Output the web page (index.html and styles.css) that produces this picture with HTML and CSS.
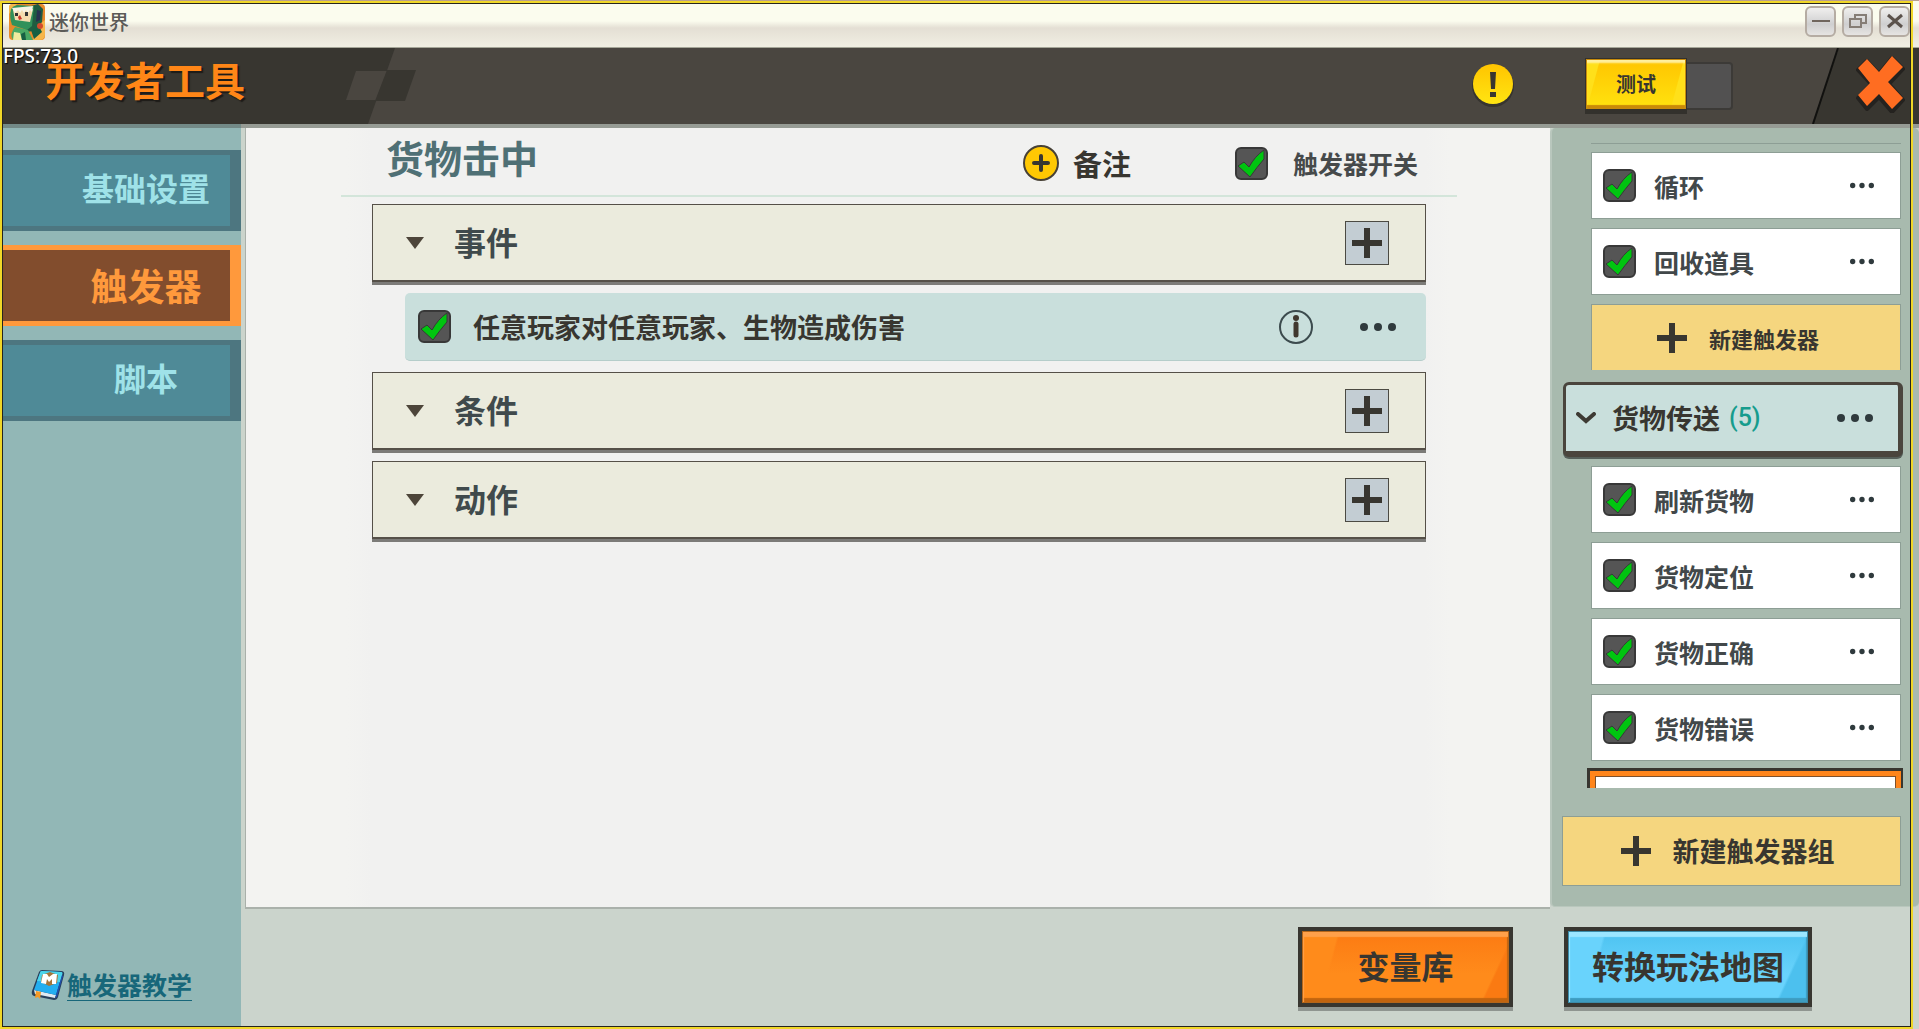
FILE: index.html
```html
<!DOCTYPE html>
<html lang="zh-CN">
<head>
<meta charset="utf-8">
<title>迷你世界</title>
<link rel="stylesheet" href="styles.css">
</head>
<body>
<svg class="symbols" aria-hidden="true">
  <symbol id="plus" viewBox="0 0 30 30"><path d="M12 0h6v12h12v6H18v12h-6V18H0v-6h12z" fill="#383630"/></symbol>
  <symbol id="dots" viewBox="0 0 36 10"><g fill="#2f3a3d"><circle cx="4" cy="5" r="4"/><circle cx="18" cy="5" r="4"/><circle cx="32" cy="5" r="4"/></g></symbol>
  <symbol id="arrow" viewBox="0 0 18 12"><path d="M0 0h18L9 12z" fill="#4d453a"/></symbol>
</svg>

<div class="titlebar">
  <svg class="app-icon" viewBox="0 0 36 36" aria-hidden="true">
    <rect width="36" height="36" rx="4" fill="#e8892a"/>
    <path d="M0 3Q0 0 4 0h4L0 10zM26 24l10-8v14q0 6-6 6h-6z" fill="#f6b64a"/>
    <path d="M22 2l7-2 5 5-1 13-8 9-9 1z" fill="#1f5d41"/>
    <path d="M2 5q2-3 6-4l17 1-2 20-5 4-15-5q-3-8-1-16z" fill="#31915a"/>
    <path d="M4 6l20-1-3 13-15-2z" fill="#f5dcae"/>
    <path d="M3 4l21-2-1 6-2-2-2 3-2-3-2 3-2-3-2 3-2-3-3 3z" fill="#f7f4e6"/>
    <path d="M6 9h3v3H6zM16 8h3v4h-3z" fill="#333"/>
    <path d="M9 13l2-2 2 4-3 1z" fill="#c93628"/>
    <path d="M28 6l4 1-1 9-4 2z" fill="#27324f"/>
    <path d="M6 23l13 3 5 10H4q-4-6 2-13z" fill="#49a964"/>
    <path d="M5 28l6 1 2 7H4z" fill="#f1eb9e"/>
    <path d="M12 30l4-2 1 8h-4zM22 26l8-4 3 6-8 7z" fill="#176043"/>
    <circle cx="31" cy="22" r="3" fill="#d24a2c"/>
  </svg>
  <span class="app-name">迷你世界</span>
  <div class="window-buttons">
    <button class="window-button" aria-label="最小化"><svg width="18" height="18" viewBox="0 0 18 18"><path d="M0 9h18" stroke="#70665e" stroke-width="2"/></svg></button>
    <button class="window-button" aria-label="还原"><svg width="18" height="18" viewBox="0 0 18 18"><g fill="none" stroke="#857d76" stroke-width="2"><path d="M6 6V3h11v8h-4"/><path d="M1 7h11v8H1z"/></g></svg></button>
    <button class="window-button" aria-label="关闭窗口"><svg width="18" height="18" viewBox="0 0 18 18"><path d="M2 3l14 12M16 3L2 15" stroke="#5b524c" stroke-width="3"/></svg></button>
  </div>
</div>

<header class="header">
  <svg class="header-art" width="420" height="76" viewBox="0 0 420 76" aria-hidden="true">
    <path d="M0 0h395l-27 76H0z" fill="#383630"/>
    <path d="M356 23h31l-11 29h-30z" fill="#4a4640"/>
    <path d="M387 22h29l-11 31h-30z" fill="#383630"/>
  </svg>
  <h1 class="tool-title">开发者工具</h1>
  <span class="fps">FPS:73.0</span>
  <button class="notice" aria-label="提示">
    <svg width="44" height="44" viewBox="0 0 44 44"><defs><linearGradient id="gold" x2="0" y2="1"><stop offset="0" stop-color="#ffc400"/><stop offset="1" stop-color="#ffe512"/></linearGradient></defs><circle cx="22" cy="22" r="21" fill="#36342f"/><circle cx="22" cy="20" r="20" fill="url(#gold)"/><path d="M19 8h6l-1 17h-4zM19 28h6v5h-6z" fill="#383630"/></svg>
  </button>
  <div class="mode-switch">
    <button class="mode-button">测试</button>
    <span class="mode-track"></span>
  </div>
  <div class="header-close">
    <svg class="close-slant" viewBox="0 0 27 76" aria-hidden="true"><path d="M27 0L0 76h27z" fill="#383630"/><path d="M26 0L1 76" stroke="#11110f" stroke-width="2"/></svg>
    <button class="close-button" aria-label="关闭">
      <svg width="50" height="58" viewBox="0 0 50 58"><path d="M3 15l9-9 12 13L37 3l11 11-14 15 14 16-11 12-13-15-12 12-9-11 13-14z" fill="#24221f" stroke="#24221f" stroke-width="4" stroke-linejoin="round"/><path d="M3 13l9-9 12 13L37 1l11 11-15 15 15 16-11 11-13-15-12 12-9-11 12-12z" fill="#ff6d21"/></svg>
    </button>
  </div>
</header>

<div class="workspace">
  <nav class="sidebar">
    <button class="tab">基础设置</button>
    <button class="tab tab-active">触发器</button>
    <button class="tab">脚本</button>
    <a class="tutorial" href="#">
      <svg width="34" height="32" viewBox="0 0 34 32" aria-hidden="true"><path d="M11 1l19 1q4 0 3 4l-6 22q-1 3-4 3L3 27q-3-1-2-5l7-19q1-2 3-2z" fill="#28405c"/><path d="M3 21l22 5-1 3L4 25z" fill="#dfeaf2"/><path d="M11 2l19 1q2 0 1 3l-6 20-22-5 6-17q0-2 2-2z" fill="#23aef0"/><path d="M11 2l19 1q2 0 1 3l-2 7L6 12l3-8q0-2 2-2z" fill="#4cd4ea"/><path d="M25 26l6-20 1 1-6 21-2 1z" fill="#1f4fae"/><path d="M11 6l8-3 8 3-1 8-8 3-8-4z" fill="#a5763a"/><path d="M10 14l2-9h4l2 3 4-3h4l-1 10h-4v-5l-3 3-2-3-1 5z" fill="#fff"/><path d="M5 22l5 1-1 7-2-2-3 1z" fill="#f59a26"/></svg>
      <span class="tutorial-text">触发器教学</span>
    </a>
  </nav>

  <main class="editor">
    <div class="editor-head">
      <h2 class="trigger-title">货物击中</h2>
      <button class="note-button">
        <svg width="36" height="36" viewBox="0 0 36 36" aria-hidden="true"><circle cx="18" cy="18" r="17" fill="#ffc803" stroke="#474136" stroke-width="2"/><path d="M18 11v14M11 18h14" stroke="#383630" stroke-width="4" stroke-linecap="round"/></svg>
        备注
      </button>
      <label class="switch"><input class="check" type="checkbox" checked>触发器开关</label>
    </div>
    <div class="sections">
      <section class="section">
        <svg class="arrow"><use href="#arrow"/></svg><h3 class="section-name">事件</h3>
        <button class="add" aria-label="添加事件"><svg class="plus"><use href="#plus"/></svg></button>
      </section>
      <div class="event">
        <label class="event-label"><input class="check" type="checkbox" checked>任意玩家对任意玩家、生物造成伤害</label>
        <button class="plain" aria-label="说明"><svg width="36" height="36" viewBox="0 0 36 36"><circle cx="18" cy="18" r="16" fill="none" stroke="#3c4b4e" stroke-width="2"/><circle cx="18" cy="9" r="3" fill="#40382f"/><path d="M18 15v11" stroke="#40382f" stroke-width="5" stroke-linecap="round"/></svg></button>
        <button class="plain" aria-label="更多"><svg class="dots"><use href="#dots"/></svg></button>
      </div>
      <section class="section">
        <svg class="arrow"><use href="#arrow"/></svg><h3 class="section-name">条件</h3>
        <button class="add" aria-label="添加条件"><svg class="plus"><use href="#plus"/></svg></button>
      </section>
      <section class="section">
        <svg class="arrow"><use href="#arrow"/></svg><h3 class="section-name">动作</h3>
        <button class="add" aria-label="添加动作"><svg class="plus"><use href="#plus"/></svg></button>
      </section>
    </div>
  </main>

  <aside class="triggers">
    <div class="trigger-scroll">
      <ul class="trigger-list trigger-list-first">
        <li class="trigger"><label class="trigger-label"><input class="check" type="checkbox" checked>循环</label><button class="plain" aria-label="更多"><svg class="dots dots-small"><use href="#dots"/></svg></button></li>
        <li class="trigger"><label class="trigger-label"><input class="check" type="checkbox" checked>回收道具</label><button class="plain" aria-label="更多"><svg class="dots dots-small"><use href="#dots"/></svg></button></li>
        <li><button class="create create-trigger"><svg class="plus"><use href="#plus"/></svg>新建触发器</button></li>
      </ul>
      <div class="group">
        <button class="group-name"><svg width="20" height="12" viewBox="0 0 20 12" aria-hidden="true"><path d="M2 2l8 7 8-7" fill="none" stroke="#3d3a33" stroke-width="4" stroke-linecap="round"/></svg>货物传送<span class="count">(5)</span></button>
        <button class="plain" aria-label="更多"><svg class="dots"><use href="#dots"/></svg></button>
      </div>
      <ul class="trigger-list">
        <li class="trigger"><label class="trigger-label"><input class="check" type="checkbox" checked>刷新货物</label><button class="plain" aria-label="更多"><svg class="dots dots-small"><use href="#dots"/></svg></button></li>
        <li class="trigger"><label class="trigger-label"><input class="check" type="checkbox" checked>货物定位</label><button class="plain" aria-label="更多"><svg class="dots dots-small"><use href="#dots"/></svg></button></li>
        <li class="trigger"><label class="trigger-label"><input class="check" type="checkbox" checked>货物正确</label><button class="plain" aria-label="更多"><svg class="dots dots-small"><use href="#dots"/></svg></button></li>
        <li class="trigger"><label class="trigger-label"><input class="check" type="checkbox" checked>货物错误</label><button class="plain" aria-label="更多"><svg class="dots dots-small"><use href="#dots"/></svg></button></li>
        <li class="trigger trigger-selected"></li>
      </ul>
    </div>
    <button class="create create-group"><svg class="plus"><use href="#plus"/></svg>新建触发器组</button>
  </aside>

  <footer class="footer">
    <button class="big-button big-button-orange">变量库</button>
    <button class="big-button big-button-blue">转换玩法地图</button>
  </footer>
</div>
<div class="frame" aria-hidden="true"></div>
</body>
</html>
```
FILE: styles.css
```css
* { box-sizing: border-box; }

body {
  margin: 0;
  height: 100vh;
  min-height: 720px;
  position: relative;
  display: flex;
  flex-direction: column;
  overflow: hidden;
  background: #cbd4cc;
  color: #383630;
  font-family: "Noto Sans CJK SC", sans-serif;
  font-weight: 700;
}

button {
  margin: 0;
  padding: 0;
  border: 0;
  background: none;
  color: inherit;
  font: inherit;
  cursor: pointer;
}

svg { display: block; flex: none; }
h1, h2, h3, ul { margin: 0; padding: 0; }
ul { list-style: none; }
.symbols { position: absolute; width: 0; height: 0; }

.frame {
  position: absolute;
  inset: 1px 6px 0 0;
  border: 2px solid #f0d728;
  outline: 1px solid #26241f;
  outline-offset: -3px;
  pointer-events: none;
  z-index: 5;
}

/* Window title bar */
.titlebar {
  flex: none;
  height: 48px;
  padding: 4px 9px 8px;
  display: flex;
  align-items: center;
  gap: 4px;
  border-top: 1px solid #b9a08e;
  border-bottom: 1px solid #a5a698;
  background: linear-gradient(#fbfcee 20px, #e4dfd4 27px, #f0eee2 45px);
}
.app-icon { width: 36px; height: 36px; }
.app-name { flex: 1; color: #5c5b58; font-size: 20px; line-height: 32px; font-weight: 500; }
.window-buttons { display: flex; gap: 6px; padding-bottom: 2px; }
.window-button {
  width: 31px;
  height: 31px;
  display: grid;
  place-items: center;
  border: 2px solid #b5aca3;
  border-radius: 6px;
  background: linear-gradient(#f0efee, #cfcfd0 60%, #e6e4e2);
}

/* Tool header */
.header {
  flex: none;
  height: 76px;
  position: relative;
  z-index: 2;
  display: flex;
  align-items: center;
  background: #4a4640;
  box-shadow: 0 4px rgba(70, 70, 66, .4);
}
.header-art { position: absolute; left: 0; top: 0; }
.fps {
  position: absolute;
  left: 3px;
  top: -4px;
  color: #fff;
  font: 500 19px/24px "Noto Sans", sans-serif;
  text-shadow: 1px 1px 1px #000;
}
.tool-title {
  position: relative;
  flex: 1;
  padding: 0 0 14px 45px;
  color: #ff8617;
  font-size: 40px;
  line-height: 48px;
  text-shadow: 2px 2px 1px #1d1b18;
}
.notice { margin-right: 70px; }
.mode-switch { display: flex; align-items: center; margin-right: 79px; }
.mode-button {
  width: 102px;
  height: 56px;
  border: 1px solid #33312c;
  border-bottom-width: 5px;
  background: linear-gradient(105deg, #ffe01a 12%, transparent 13%, transparent 86%, #ffe01a 87%), linear-gradient(#ffc400, #ffe30f);
  box-shadow: inset 0 0 0 1px #c78b0c, inset 0 4px 2px #fff0a0, inset 0 -4px 1px #c98a08;
  font-size: 20px;
  line-height: 48px;
}
.mode-track { width: 46px; height: 48px; border: 2px solid #3c3a37; border-left: 0; border-radius: 0 4px 4px 0; background: #525151; }
.header-close { display: flex; align-self: stretch; }
.close-slant { width: 27px; height: 76px; }
.close-button { width: 80px; display: grid; place-items: center; padding: 0 0 4px 2px; background: #383630; }

/* Columns under the header */
.workspace {
  flex: 1;
  min-height: 0;
  display: grid;
  grid-template-columns: 241px minmax(0, 1fr) 369px;
  grid-template-rows: minmax(0, 1fr) 122px;
}

.sidebar {
  grid-row: 1 / 3;
  display: flex;
  flex-direction: column;
  gap: 14px;
  padding: 26px 0 28px 3px;
  background: #92b7b6;
}
.tab {
  height: 81px;
  padding: 0 0 7px 59px;
  border: solid #4d7680;
  border-width: 5px 11px 5px 0;
  background: #4f8a97;
  color: #9fe2e8;
  font-size: 32px;
  line-height: 48px;
}
.tab-active { border-color: #ff993c; background: #824d2d; color: #ff993c; font-size: 37px; padding-bottom: 2px; }
.tutorial {
  margin-top: auto;
  padding-left: 28px;
  display: flex;
  align-items: center;
  gap: 2px;
  color: #17677a;
  font-size: 25px;
  line-height: 31px;
  text-decoration: none;
}
.tutorial-text { padding-bottom: 1px; border-bottom: 1px solid #17677a; line-height: 29px; }

/* Trigger editor */
.editor {
  margin: 4px 0 0 4px;
  border-left: 1px solid #a9b0aa;
  background: linear-gradient(90deg, #f3f3f1 100px, #f1f1f0 125px, #f1f1f0 calc(100% - 125px), #f3f3f1 calc(100% - 100px));
  box-shadow: 0 2px #aab1ab;
}
.editor-head {
  height: 69px;
  margin: 0 93px 0 95px;
  padding: 3px 39px 0 45px;
  display: flex;
  align-items: center;
  border-bottom: 2px solid #d3e5da;
}
.trigger-title { flex: 1; padding-bottom: 12px; color: #4f7075; font-size: 38px; line-height: 48px; }
.note-button { display: flex; align-items: center; gap: 14px; margin-right: 104px; font-size: 29px; line-height: 40px; }
.switch { display: flex; align-items: center; gap: 25px; color: #464a4b; font-size: 25px; line-height: 36px; }

.check {
  appearance: none;
  flex: none;
  width: 33px;
  height: 33px;
  margin: 0;
  border: 2px solid #383838;
  border-radius: 6px;
  background-color: #555;
}
.check:checked {
  background-image: url("data:image/svg+xml,%3Csvg xmlns='http://www.w3.org/2000/svg' viewBox='0 0 29 29'%3E%3Cpath d='M1 17l6-4 5 5Q18 7 27 1v9Q20 18 13 28z' fill='%2300c510' stroke='%23383838' stroke-width='1'/%3E%3C/svg%3E");
}

.sections { margin: 7px 124px 0 126px; display: flex; flex-direction: column; gap: 8px; }
.section {
  height: 78px;
  margin-bottom: 3px;
  padding: 0 36px 0 33px;
  display: flex;
  align-items: center;
  border: 1px solid #555048;
  border-bottom-width: 2px;
  background: #ebebdd;
  box-shadow: 0 3px #7c7b78;
}
.arrow { width: 18px; height: 12px; margin-right: 30px; }
.section-name { flex: 1; padding-bottom: 3px; color: #404a4c; font-size: 32px; line-height: 40px; }
.add {
  width: 44px;
  height: 44px;
  display: grid;
  place-items: center;
  border: 1px solid #4b4a43;
  background: #c3cdd3;
}
.plus { width: 30px; height: 30px; }
.event {
  height: 68px;
  margin: 0 0 3px 33px;
  padding: 0 30px 0 13px;
  display: flex;
  align-items: center;
  gap: 46px;
  border-bottom: 1px solid #b5cdca;
  border-radius: 5px;
  background: #c9dfdc;
}
.event-label { flex: 1; display: flex; align-items: center; gap: 22px; font-size: 27px; line-height: 36px; }
.dots { width: 36px; height: 10px; }
.dots-small { width: 24px; height: 7px; }

/* Trigger groups */
.triggers {
  display: flex;
  flex-direction: column;
  gap: 28px;
  margin-top: 4px;
  padding: 15px 16px 20px 10px;
  border-radius: 5px;
  border: solid #b9c7bd;
  border-width: 0 0 1px 2px;
  background: #a8baae;
}
.trigger-scroll { flex: 1; min-height: 0; overflow: hidden; }
.trigger-list { display: flex; flex-direction: column; gap: 9px; margin: 9px 2px 0 29px; }
.trigger-list-first { margin-top: 0; padding-top: 8px; border-top: 1px solid #8d9e95; }
.trigger {
  height: 67px;
  padding: 0 26px 0 11px;
  display: flex;
  align-items: center;
  border: 1px solid #8d9e95;
  background: #fff;
}
.trigger-label { flex: 1; display: flex; align-items: center; gap: 18px; color: #42484a; font-size: 25px; line-height: 36px; }
.trigger-selected { height: 72px; margin: -2px -3px 0 -4px; border: 3px solid #383630; box-shadow: inset 0 0 0 5px #ff851b, inset 0 0 0 6px #7d512c; }
.group {
  height: 75px;
  margin: 12px 0 0 1px;
  padding: 0 25px 0 10px;
  display: flex;
  align-items: center;
  border: solid #4a453d;
  border-width: 3px 5px 6px 3px;
  border-radius: 6px;
  background: #c9dfdc;
  box-shadow: 0 2px #56605a;
}
.group-name { flex: 1; display: flex; align-items: center; font-size: 27px; line-height: 40px; }
.group-name svg { margin-right: 16px; }
.count { margin-left: 9px; color: #169c8d; font: 500 25px/40px Roboto, sans-serif; }
.create {
  width: 100%;
  display: flex;
  align-items: center;
  justify-content: center;
  gap: 22px;
  border: 1px solid #8d9e95;
  background: #f5d67f;
}
.create-trigger { height: 66px; padding-right: 16px; border-bottom: 0; font-size: 22px; line-height: 32px; }
.create-group { flex: none; width: auto; height: 70px; margin-right: 2px; padding-right: 8px; font-size: 27px; line-height: 40px; }

/* Footer actions */
.footer { grid-column: 2 / 4; display: flex; justify-content: flex-end; align-items: flex-start; gap: 51px; padding: 20px 107px 0 0; }
.big-button {
  height: 80px;
  padding-bottom: 5px;
  border: 4px solid #383630;
  font-size: 32px;
  line-height: 40px;
}
.big-button-orange {
  width: 215px;
  background: linear-gradient(115deg, transparent 88%, #fa7a12 89%), linear-gradient(105deg, #ff8b1b 16%, transparent 17%), linear-gradient(#fc7a12, #ff8b1b 60%);
  box-shadow: 0 4px #8f9590, inset 0 0 0 1px #b5661a, inset 2px 6px 1px #ffa04a, inset -2px -5px 1px #c2640f;
}
.big-button-blue {
  width: 248px;
  background: linear-gradient(115deg, transparent 88%, #4cc0ee 89%), linear-gradient(105deg, #69d3fc 14%, transparent 15%), linear-gradient(#4cc2f0, #69d3fc 60%);
  box-shadow: 0 4px #8f9590, inset 0 0 0 1px #3b8ba8, inset 2px 6px 1px #9be6ff, inset -2px -5px 1px #3d9cc0;
}
```
